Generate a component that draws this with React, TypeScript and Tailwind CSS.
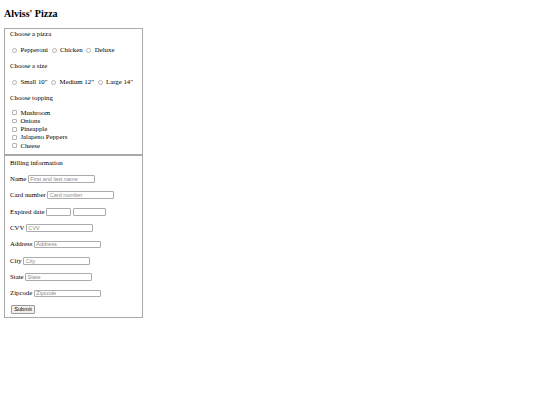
import React from "react";

function Radio({ label }: { label: string }) {
  return (
    <label className="flex items-center mr-[1.7px]">
      <span className="ml-[2px] mr-[3.4px] w-[5px] h-[5px] rounded-full border border-[#b4b4b4] bg-white" />
      <span>{label}</span>
    </label>
  );
}

function Check({ label }: { label: string }) {
  return (
    <label className="flex items-center h-[8.2px]">
      <span className="ml-[1.8px] mr-[3.8px] w-[4.8px] h-[4.8px] rounded-[1px] border border-[#b4b4b4] bg-white" />
      <span>{label}</span>
    </label>
  );
}

function Field({ label, placeholder }: { label: string; placeholder: string }) {
  return (
    <div className="flex items-center h-[9px] gap-[1.7px]">
      <span>{label}</span>
      <input
        placeholder={placeholder}
        className="w-[67px] h-[7.8px] border border-[#ababab] rounded-[1px] px-[1.3px] font-['Liberation_Sans',Arial,sans-serif] text-[5.6px] leading-none placeholder:text-[#8c8c8c] bg-white outline-none"
      />
    </div>
  );
}

export default function App() {
  return (
    <div className="min-h-[405px] w-[540px] bg-white text-black font-['Liberation_Serif','Times_New_Roman',serif] text-[6.8px] leading-[8px]">
      <div className="pl-[4px] pt-[8px]">
        <h2 className="text-[10px] leading-[12px] font-bold">Alviss' Pizza</h2>

        {/* Pizza choice */}
        <form className="mt-[8px] w-[139px]">
          <div className="border border-[#a9a9a9] px-[5px] pt-[1px] pb-[4px]">
            <div className="flex flex-col gap-[8px]">
              <div className="h-[8px]">Choose a pizza</div>
              <div className="flex items-center h-[8px]">
                <Radio label="Pepperoni" />
                <Radio label="Chicken" />
                <Radio label="Deluxe" />
              </div>
              <div className="h-[8px]">Choose a size</div>
              <div className="flex items-center h-[8px]">
                <Radio label='Small 10"' />
                <Radio label='Medium 12"' />
                <Radio label='Large 14"' />
              </div>
              <div className="h-[8px]">Choose topping</div>
            </div>
            <div className="mt-[6.8px] flex flex-col">
              <Check label="Mushroom" />
              <Check label="Onions" />
              <Check label="Pineapple" />
              <Check label="Jalapeno Peppers" />
              <Check label="Cheese" />
            </div>
          </div>

          {/* Billing */}
          <div className="border border-[#a9a9a9] px-[5px] pt-[3px] pb-[3px]">
            <div className="h-[8px]">Billing information</div>
            <div className="mt-[7.8px] flex flex-col gap-[7.35px]">
              <Field label="Name" placeholder="First and last name" />
              <Field label="Card number" placeholder="Card number" />
              <div className="flex items-center h-[9px] gap-[1.7px]">
                <span>Expired date</span>
                <input className="w-[25px] h-[7.8px] border border-[#ababab] rounded-[1px] bg-white outline-none" />
                <input className="w-[33px] h-[7.8px] border border-[#ababab] rounded-[1px] bg-white outline-none" />
              </div>
              <Field label="CVV" placeholder="CVV" />
              <Field label="Address" placeholder="Address" />
              <Field label="City" placeholder="City" />
              <Field label="State" placeholder="State" />
              <Field label="Zipcode" placeholder="Zipcode" />
              <div className="flex items-center h-[9px]">
                <button
                  type="button"
                  className="ml-[1px] w-[24px] h-[9px] flex items-center justify-center border border-[#9a9a9a] rounded-[1px] bg-[#efefef] font-['Liberation_Sans',Arial,sans-serif] text-[5.6px] leading-none text-black"
                >
                  Submit
                </button>
              </div>
            </div>
          </div>
        </form>
      </div>
    </div>
  );
}
